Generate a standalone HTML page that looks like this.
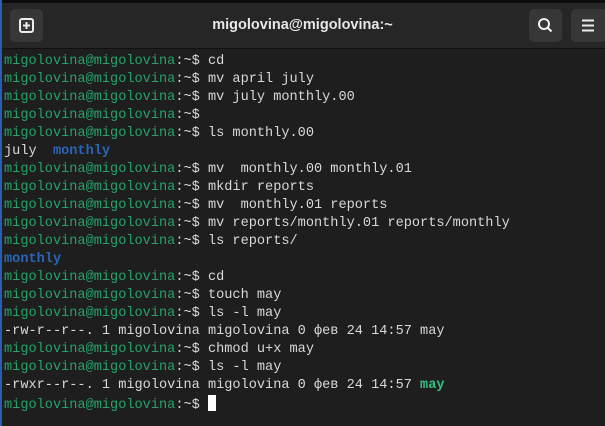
<!DOCTYPE html>
<html><head><meta charset="utf-8"><style>
html,body{margin:0;padding:0;width:605px;height:426px;overflow:hidden;background:#1e1e1e;}
.top{position:absolute;left:0;top:0;width:605px;height:3px;background:#0c0c0c}
.hdr{position:absolute;left:0;top:3px;width:605px;height:45px;background:#262626;border-bottom:1px solid #111;}
.btn{position:absolute;top:6px;width:33px;height:33px;background:#373737;border-radius:5px}
.title{position:absolute;left:0;width:605px;top:14px;text-align:center;color:#e8e8e8;font:bold 14.5px "Liberation Sans",sans-serif}
.lb{position:absolute;left:0;top:0;width:2px;height:426px;background:#2a5ea8}
pre{position:absolute;left:4px;top:53px;margin:0;font:13.6px/18px "Liberation Mono","DejaVu Sans Mono",monospace;color:#d8d8d8;}
.g{color:#26a269}.b{color:#2a64b8;font-weight:bold}.gb{color:#33c07d;font-weight:bold}
.c{display:inline-block;width:8px;height:16px;background:#fff;vertical-align:-3px}
</style></head><body>
<div class="top"></div>
<div class="hdr">
 <div class="btn" style="left:10px"><svg width="33" height="33"><rect x="10" y="10" width="13" height="13" rx="2" fill="none" stroke="#eee" stroke-width="2"/><path d="M16.5 13v7M13 16.5h7" stroke="#eee" stroke-width="2"/></svg></div>
 <div class="title">migolovina@migolovina:~</div>
 <div class="btn" style="left:529px"><svg width="33" height="33"><circle cx="15" cy="15" r="5" fill="none" stroke="#eee" stroke-width="2"/><path d="M18.5 18.5l4 4" stroke="#eee" stroke-width="2.2"/></svg></div>
 <div class="btn" style="left:571px;width:36px"><svg width="33" height="33"><path d="M11 11.5h12M11 16.5h12M11 21.5h12" stroke="#eee" stroke-width="2"/></svg></div>
</div>
<div class="lb"></div>
<pre><span class="g">migolovina@migolovina</span>:~$ cd
<span class="g">migolovina@migolovina</span>:~$ mv april july
<span class="g">migolovina@migolovina</span>:~$ mv july monthly.00
<span class="g">migolovina@migolovina</span>:~$
<span class="g">migolovina@migolovina</span>:~$ ls monthly.00
july  <span class="b">monthly</span>
<span class="g">migolovina@migolovina</span>:~$ mv  monthly.00 monthly.01
<span class="g">migolovina@migolovina</span>:~$ mkdir reports
<span class="g">migolovina@migolovina</span>:~$ mv  monthly.01 reports
<span class="g">migolovina@migolovina</span>:~$ mv reports/monthly.01 reports/monthly
<span class="g">migolovina@migolovina</span>:~$ ls reports/
<span class="b">monthly</span>
<span class="g">migolovina@migolovina</span>:~$ cd
<span class="g">migolovina@migolovina</span>:~$ touch may
<span class="g">migolovina@migolovina</span>:~$ ls -l may
-rw-r--r--. 1 migolovina migolovina 0 фев 24 14:57 may
<span class="g">migolovina@migolovina</span>:~$ chmod u+x may
<span class="g">migolovina@migolovina</span>:~$ ls -l may
-rwxr--r--. 1 migolovina migolovina 0 фев 24 14:57 <span class="gb">may</span>
<span class="g">migolovina@migolovina</span>:~$ <span class="c"></span></pre>
</body></html>
